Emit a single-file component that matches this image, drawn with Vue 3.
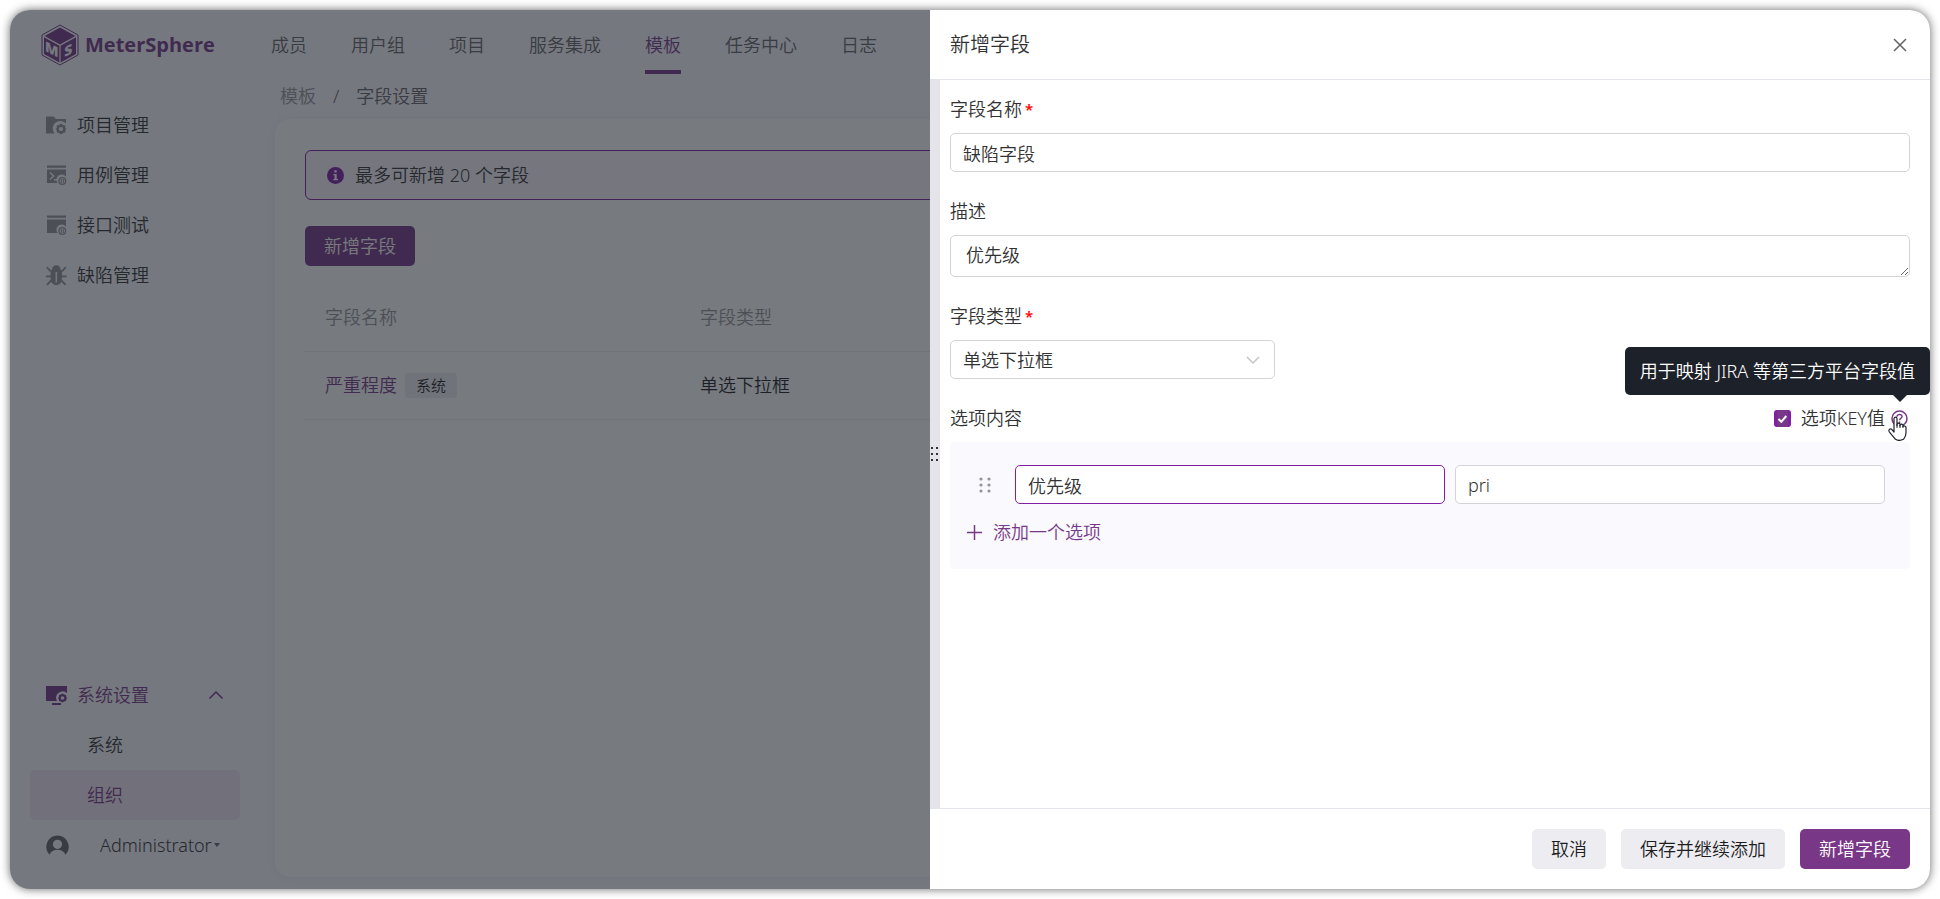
<script setup>
import { ref } from 'vue'

const navItems = ['成员', '用户组', '项目', '服务集成', '模板', '任务中心', '日志']
const activeNav = '模板'

const menuItems = [
  { name: '项目管理', icon: 'folder' },
  { name: '用例管理', icon: 'case' },
  { name: '接口测试', icon: 'api' },
  { name: '缺陷管理', icon: 'bug' }
]

const rows = [{ name: '严重程度', tag: '系统', type: '单选下拉框' }]

const fieldName = ref('缺陷字段')
const description = ref('优先级')
const fieldType = ref('单选下拉框')
const showKey = ref(true)
const options = ref([{ text: '优先级', key: 'pri' }])

const addOption = () => options.value.push({ text: '', key: '' })
</script>

<template>
  <div class="frame">
    <header class="topbar">
      <a class="brand" href="#">
        <svg class="logo" viewBox="0 0 38 42" aria-hidden="true">
          <path d="M19 1 37 11V31L19 41 1 31V11Z" fill="none" stroke="currentColor" stroke-width="1" />
          <path d="M19 3.4 34.4 12 19 20.6 3.6 12Z" fill="currentColor" />
          <path d="M3 13.2 18.4 21.7V38.6L3 30Z" fill="currentColor" />
          <path d="M35 13.2 19.6 21.7V38.6L35 30Z" fill="currentColor" />
          <text class="logo-letter" x="10.7" y="25" text-anchor="middle" transform="matrix(1 .5 0 1 0 0)">M</text>
          <text class="logo-letter" x="27.3" y="45" text-anchor="middle" transform="matrix(1 -.5 0 1 0 0)">S</text>
        </svg>
        <span class="brand-name">MeterSphere</span>
      </a>
      <nav class="nav">
        <a v-for="item in navItems" :key="item" href="#" class="nav-link" :class="{ active: item === activeNav }">{{ item }}</a>
      </nav>
    </header>

    <div class="layout">
      <aside class="sidebar">
        <nav class="menu">
          <a v-for="item in menuItems" :key="item.name" href="#" class="menu-item">
            <svg class="menu-icon" viewBox="0 0 21 21" aria-hidden="true">
              <g v-if="item.icon === 'folder'">
                <path d="M0 1.5H7.5L10 4H20V8.5A7 7 0 0 0 8.6 18.5H0Z" fill="currentColor" />
                <path d="M15 8.6 17 10 19.3 10.6 19.4 13 20.3 14 19.4 15.2 19.3 17.4 17 18 15 19.6 13 18 10.8 17.4 10.7 15.2 9.7 14 10.7 13 10.8 10.6 13 10Z" fill="currentColor" />
                <circle cx="15" cy="14" r="2.1" fill="#f9f9fe" />
              </g>
              <g v-else-if="item.icon === 'bug'">
                <path d="M6 4.6C6 2 8 .3 10.3.3S14.6 2 14.6 4.6L16 6V13C16 17.5 13.5 20 10.3 20S4.6 17.5 4.6 13V6Z" fill="currentColor" />
                <path d="M4.8 6.5.8 2.2M15.8 6.5 19.8 2.2M5 11.4H0M15.6 11.4H20.6M5.2 15.5 1 19.8M15.4 15.5 19.6 19.8" fill="none" stroke="currentColor" stroke-width="1.8" />
                <path d="M10.3 7V17.5" stroke="#f9f9fe" stroke-width="1.5" />
              </g>
              <g v-else>
                <path d="M1 .5H20V2.8H1ZM1 4.5H20V11.5A5 5 0 0 0 11.5 18H1Z" fill="currentColor" />
                <path v-if="item.icon === 'case'" d="M4 7.5 7.6 11 4 14.5M8 14.8H11.5" fill="none" stroke="#f9f9fe" stroke-width="1.5" />
                <circle cx="16.3" cy="16" r="3.3" fill="none" stroke="currentColor" stroke-width="1.3" />
                <path d="M15.3 14V18M17.3 14V18" stroke="currentColor" stroke-width="1" />
              </g>
            </svg>
            {{ item.name }}
          </a>
        </nav>

        <nav class="menu">
          <a href="#" class="menu-item selected">
            <svg class="menu-icon" viewBox="0 0 21 21" aria-hidden="true">
              <path d="M0 1H21V8A6.5 6.5 0 0 0 11 16H0ZM6 18H15V20H6Z" fill="currentColor" />
              <path d="M16.5 8.6 18 9.6 20 10 20.3 12 21 13 20.3 14.2 20 16 18 16.5 16.5 17.6 15 16.5 13 16 12.8 14.2 12 13 12.8 12 13 10 15 9.6Z" fill="currentColor" />
              <circle cx="16.5" cy="13" r="1.8" fill="#f9f9fe" />
            </svg>
            系统设置
            <svg class="fold" viewBox="0 0 16 10" aria-hidden="true"><path d="M1.5 8.5 8 2 14.5 8.5" fill="none" stroke="currentColor" stroke-width="1.5" /></svg>
          </a>
          <a href="#" class="menu-item sub">系统</a>
          <a href="#" class="menu-item sub current">组织</a>
          <button type="button" class="menu-item user">
            <svg class="avatar" viewBox="0 0 23 23" aria-hidden="true">
              <path d="M11.5 1.5A11.5 11.5 0 0 0 3.4 20.8 9 9 0 0 1 19.6 20.8 11.5 11.5 0 0 0 11.5 1.5Z" fill="currentColor" />
              <circle cx="11.5" cy="10.3" r="4.6" fill="#f9f9fe" />
            </svg>
            <span>Administrator</span>
            <svg class="caret" viewBox="0 0 6 4" aria-hidden="true"><path d="M0 0H6L3 4Z" fill="currentColor" /></svg>
          </button>
        </nav>
      </aside>

      <main class="main">
        <div class="crumbs">
          <a href="#" class="crumb-link">模板</a>
          <span>/</span>
          <span>字段设置</span>
        </div>
        <section class="card">
          <div class="notice">
            <svg class="notice-icon" viewBox="0 0 17 17" aria-hidden="true">
              <circle cx="8.5" cy="8.5" r="8.5" fill="currentColor" />
              <path d="M7.3 3.3H9.7V5.5H7.3ZM6.3 7H9.7V12H11V13.3H6.2V12H7.5V8.3H6.3Z" fill="#fff" />
            </svg>
            最多可新增 20 个字段
          </div>
          <button type="button" class="btn primary">新增字段</button>
          <table class="table">
            <thead>
              <tr><th class="col-name">字段名称</th><th>字段类型</th></tr>
            </thead>
            <tbody>
              <tr v-for="row in rows" :key="row.name">
                <td><div class="name-cell"><a href="#" class="name-link">{{ row.name }}</a><span class="tag">{{ row.tag }}</span></div></td>
                <td>{{ row.type }}</td>
              </tr>
            </tbody>
          </table>
        </section>
      </main>
    </div>

    <div class="mask"></div>

    <section class="drawer" role="dialog" aria-labelledby="drawer-title">
      <header class="drawer-head">
        <h2 id="drawer-title">新增字段</h2>
        <button type="button" class="close" aria-label="关闭">
          <svg viewBox="0 0 14 14" aria-hidden="true"><path d="M1 1 13 13M13 1 1 13" stroke="currentColor" stroke-width="1.5" /></svg>
        </button>
      </header>

      <div class="drawer-body">
        <div class="resizer">
          <svg viewBox="0 0 8 14" aria-hidden="true">
            <path d="M0 0H2V2H0ZM5 0H7V2H5ZM0 6H2V8H0ZM5 6H7V8H5ZM0 12H2V14H0ZM5 12H7V14H5Z" fill="currentColor" />
          </svg>
        </div>
        <form class="form" @submit.prevent>
          <div class="field">
            <label class="label" for="field-name">字段名称<span class="star">*</span></label>
            <input id="field-name" v-model="fieldName" class="control" type="text">
          </div>
          <div class="field">
            <label class="label" for="field-desc">描述</label>
            <textarea id="field-desc" v-model="description" class="control area" rows="1"></textarea>
          </div>
          <div class="field">
            <label class="label" for="field-type">字段类型<span class="star">*</span></label>
            <div class="select-wrap">
              <select id="field-type" v-model="fieldType" class="control">
                <option>单选下拉框</option>
              </select>
              <svg class="chevron" viewBox="0 0 14 9" aria-hidden="true"><path d="M1 1 7 7 13 1" fill="none" stroke="currentColor" stroke-width="1.5" /></svg>
            </div>
          </div>
          <div class="field">
            <div class="label options-head">
              <span>选项内容</span>
              <div class="key-toggle">
                <span class="check">
                  <input id="show-key" v-model="showKey" type="checkbox">
                  <svg v-if="showKey" viewBox="0 0 17 17" aria-hidden="true"><path d="M4.5 9 7.3 11.8 12.3 6" fill="none" stroke="#fff" stroke-width="2" /></svg>
                </span>
                <label for="show-key">选项KEY值</label>
                <span class="help">
                  <svg viewBox="0 0 17 17" aria-hidden="true">
                    <circle cx="8.5" cy="8.5" r="7.5" fill="none" stroke="currentColor" stroke-width="1.5" />
                    <path d="M6 6.8C6 3.5 11.2 3.7 11 6.7 10.9 8.3 8.5 8.3 8.5 10.2M8.5 11.5V13" fill="none" stroke="currentColor" stroke-width="1.5" />
                  </svg>
                  <span class="tooltip" role="tooltip">用于映射 JIRA 等第三方平台字段值</span>
                  <svg class="pointer" viewBox="0 0 19 25" aria-hidden="true">
                    <path d="M6 14V2.8C6 .6 9 .6 9 2.8V9.5V8C9.8 6.7 11.8 7 12 8.5V10 8.8C12.8 7.7 14.7 8 15 9.3V10.5C15.8 9.5 18 9.9 18 11.7V17C18 19.5 17.3 21 15.5 23.3 12.5 24.7 9.5 24.7 7.5 23.3L1.3 15.8C.1 13.8 2 12.2 3.7 13.3L6 16Z" fill="#fff" stroke="#1d2129" stroke-width="1.2" stroke-linejoin="round" />
                    <path d="M9 8V12M12 9V12M15 10V12" fill="none" stroke="#1d2129" stroke-width="1" />
                  </svg>
                </span>
              </div>
            </div>
            <div class="options">
              <div v-for="(option, index) in options" :key="index" class="option-row">
                <svg class="drag" viewBox="0 0 12 16" aria-hidden="true">
                  <g fill="currentColor">
                    <circle cx="2" cy="2" r="1.6" /><circle cx="10" cy="2" r="1.6" />
                    <circle cx="2" cy="8" r="1.6" /><circle cx="10" cy="8" r="1.6" />
                    <circle cx="2" cy="14" r="1.6" /><circle cx="10" cy="14" r="1.6" />
                  </g>
                </svg>
                <input v-model="option.text" class="control focused" type="text" aria-label="选项内容">
                <input v-model="option.key" class="control" type="text" aria-label="选项KEY值">
              </div>
              <button type="button" class="add" @click="addOption">
                <svg viewBox="0 0 15 15" aria-hidden="true"><path d="M7.5 0V15M0 7.5H15" stroke="currentColor" stroke-width="1.5" /></svg>
                添加一个选项
              </button>
            </div>
          </div>
        </form>
      </div>

      <footer class="drawer-foot">
        <button type="button" class="btn">取消</button>
        <button type="button" class="btn">保存并继续添加</button>
        <button type="button" class="btn primary">新增字段</button>
      </footer>
    </section>
  </div>
</template>

<style>
body {
  margin: 0;
  background: #fff;
}
</style>

<style scoped>
.frame {
  position: relative;
  display: flex;
  flex-direction: column;
  box-sizing: border-box;
  min-height: calc(100vh - 20px);
  margin: 10px;
  overflow: hidden;
  border-radius: 20px;
  background: #f9f9fe;
  box-shadow: 0 0 10px rgba(0, 0, 0, 0.6);
  color: #323233;
  font: 350 18px/28px "Noto Sans", "Noto Sans CJK SC", sans-serif;
}
.frame *,
.frame *::before,
.frame *::after {
  box-sizing: border-box;
}
a {
  color: inherit;
  text-decoration: none;
}
button,
input,
textarea,
select {
  margin: 0;
  color: inherit;
  font: inherit;
}
button {
  border: 0;
  background: none;
}
svg {
  display: block;
  flex: none;
}

.topbar {
  display: flex;
  height: 70px;
}
.brand {
  display: flex;
  align-items: center;
  gap: 6px;
  width: 230px;
  margin-left: 31px;
  color: #783887;
}
.logo {
  width: 38px;
  height: 42px;
}
.logo-letter {
  fill: #f9f9fe;
  font: 800 14px "Open Sans", sans-serif;
}
.brand-name {
  font-family: "Open Sans", sans-serif;
  font-size: 20px;
  font-weight: 700;
}
.nav {
  display: flex;
  gap: 44px;
}
.nav-link {
  position: relative;
  line-height: 70px;
  color: #646466;
}
.nav-link.active {
  color: #783887;
}
.nav-link.active::after {
  position: absolute;
  right: 0;
  bottom: 6px;
  left: 0;
  height: 4px;
  background: #783887;
  content: "";
}

.layout {
  display: flex;
  flex: 1;
}
.sidebar {
  display: flex;
  flex-direction: column;
  justify-content: space-between;
  width: 250px;
  padding: 20px 20px 19px;
}
.menu-item {
  display: flex;
  align-items: center;
  width: 100%;
  height: 50px;
  padding: 0 16px;
  border-radius: 5px;
}
.menu-icon {
  width: 21px;
  height: 21px;
  margin-right: 10px;
  color: #959598;
}
.selected,
.selected .menu-icon,
.current {
  color: #783887;
}
.fold {
  width: 16px;
  height: 10px;
  margin-left: auto;
}
.sub {
  padding-left: 57px;
}
.current {
  background: #f2e6f4;
}
.avatar {
  width: 23px;
  height: 23px;
  margin-right: 31px;
  color: #646466;
}
.caret {
  width: 6px;
  height: 4px;
  margin-left: 2px;
  color: #646466;
}

.main {
  display: flex;
  flex: 1;
  flex-direction: column;
  padding: 0 15px 12px;
}
.crumbs {
  display: flex;
  gap: 17px;
  padding: 2px 5px 9px;
  color: #646466;
}
.crumb-link {
  color: #959598;
}
.card {
  flex: 1;
  padding: 31px 30px;
  border-radius: 15px;
  background: #fff;
  box-shadow: 0 0 10px rgba(120, 56, 135, 0.05);
}
.notice {
  display: flex;
  align-items: center;
  gap: 11px;
  height: 50px;
  margin-bottom: 26px;
  padding: 0 21px;
  border: 1px solid #811fa3;
  border-radius: 6px;
  background: #fbf4fd;
}
.notice-icon {
  width: 17px;
  height: 17px;
  color: #811fa3;
}
.btn {
  height: 40px;
  padding: 0 19px;
  border-radius: 5px;
  background: #ededf1;
  color: #1d1d1f;
}
.btn.primary {
  background: #783887;
  color: #fff;
}
.table {
  width: 100%;
  margin-top: 17px;
  border-collapse: collapse;
  text-align: left;
}
th,
td {
  height: 68px;
  padding: 0 20px;
  border-bottom: 1px solid #ededf1;
  font-weight: inherit;
}
th {
  color: #959598;
}
td {
  color: #1d1d1f;
}
.col-name {
  width: 375px;
}
.name-cell {
  display: flex;
  align-items: center;
  gap: 8px;
}
.name-link {
  color: #783887;
}
.tag {
  padding: 0 11px;
  border-radius: 4px;
  background: #ededf1;
  font-size: 15px;
  line-height: 25px;
}

.mask {
  position: absolute;
  inset: 0;
  background: rgba(29, 33, 41, 0.6);
}
.drawer {
  position: absolute;
  top: 0;
  right: 0;
  bottom: 0;
  display: flex;
  flex-direction: column;
  width: min(1000px, 100%);
  background: #fff;
}
.drawer-head {
  display: flex;
  align-items: center;
  justify-content: space-between;
  height: 70px;
  padding: 0 20px;
  border-bottom: 1px solid #e5e6eb;
}
h2 {
  margin: 0;
  font-size: 20px;
  font-weight: inherit;
}
.close {
  padding: 3px;
  color: #646466;
}
.close svg {
  width: 14px;
  height: 14px;
}
.drawer-body {
  display: flex;
  flex: 1;
}
.resizer {
  display: flex;
  align-items: center;
  justify-content: center;
  width: 10px;
  padding-top: 20px;
  background: #e4e4ea;
}
.resizer svg {
  width: 8px;
  height: 14px;
}
.form {
  display: flex;
  flex: 1;
  flex-direction: column;
  gap: 25px;
  padding: 15px 20px 15px 10px;
}
.label {
  display: flex;
  height: 28px;
  margin-bottom: 10px;
}
.star {
  margin-left: 3px;
  color: #f00;
  font-size: 15px;
  font-weight: 600;
}
.control {
  display: block;
  width: 100%;
  height: 39px;
  padding: 0 12px;
  border: 1px solid #d4d4d8;
  border-radius: 5px;
  outline: 0;
  background: #fff;
}
.control.focused {
  border-color: #811fa3;
}
.area {
  height: 42px;
  padding: 5px 15px;
  resize: vertical;
}
.select-wrap {
  position: relative;
  width: 325px;
}
.select-wrap .control {
  appearance: none;
}
.chevron {
  position: absolute;
  top: 16px;
  right: 15px;
  width: 14px;
  height: 9px;
  color: #c4c4c9;
  pointer-events: none;
}
.options-head {
  justify-content: space-between;
}
.key-toggle {
  display: flex;
  align-items: center;
  padding-right: 2px;
}
.check {
  position: relative;
  width: 17px;
  height: 17px;
  margin-right: 10px;
}
.check input {
  display: block;
  width: 17px;
  height: 17px;
  border: 1px solid #d4d4d8;
  border-radius: 3px;
  appearance: none;
}
.check input:checked {
  border-color: #811fa3;
  border-width: 0 3px;
  background: #783887;
}
.check svg {
  position: absolute;
  inset: 0;
  pointer-events: none;
}
.help {
  position: relative;
  margin-left: 6px;
  color: #783887;
}
.help svg {
  width: 17px;
  height: 17px;
}
.help .pointer {
  position: absolute;
  top: 6px;
  left: -3px;
  width: 19px;
  height: 25px;
}
.tooltip {
  position: absolute;
  right: -22px;
  bottom: 32px;
  padding: 10px 15px;
  border-radius: 5px;
  background: #1d2129;
  color: #fff;
  white-space: nowrap;
}
.tooltip::after {
  position: absolute;
  top: 100%;
  right: 23px;
  border: 7px solid transparent;
  border-top-color: #1d2129;
  border-bottom: 0;
  content: "";
}
.options {
  padding: 23px 25px 41px 15px;
  border-radius: 5px;
  background: #f9f9fe;
}
.option-row {
  display: flex;
  align-items: center;
  gap: 10px;
  margin-bottom: 14px;
  padding-left: 14px;
}
.drag {
  width: 12px;
  height: 16px;
  margin-right: 14px;
  color: #959598;
}
.option-row .control {
  flex: 1;
  min-width: 0;
}
.add {
  display: flex;
  align-items: center;
  gap: 11px;
  padding: 0 2px;
  color: #783887;
}
.options {
  padding-bottom: 23px;
}
.add svg {
  width: 15px;
  height: 15px;
}
.drawer-foot {
  display: flex;
  justify-content: flex-end;
  gap: 15px;
  padding: 20px;
  border-top: 1px solid #e5e6eb;
}
</style>
